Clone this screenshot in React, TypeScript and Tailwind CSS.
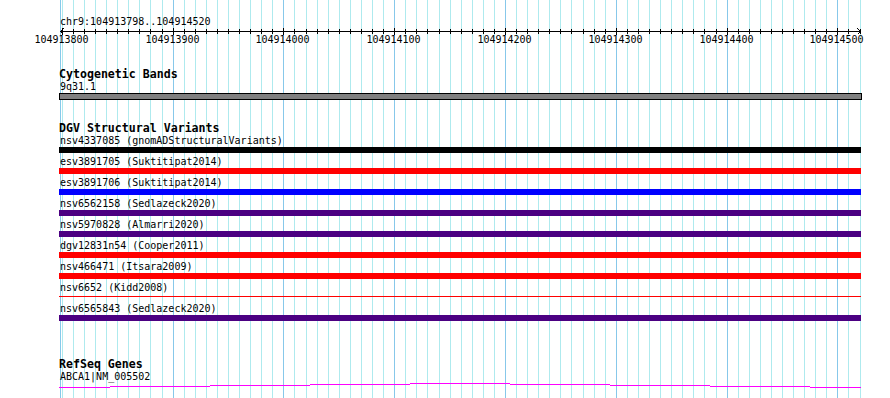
const mono = "font-['DejaVu_Sans_Mono','Liberation_Mono',monospace]"

type Variant = {
  label: string
  color: string
  thin?: boolean
}

const variants: Variant[] = [
  { label: 'nsv4337085 (gnomADStructuralVariants)', color: 'bg-black' },
  { label: 'esv3891705 (Suktitipat2014)', color: 'bg-[#ff0000]' },
  { label: 'esv3891706 (Suktitipat2014)', color: 'bg-[#0000ff]' },
  { label: 'nsv6562158 (Sedlazeck2020)', color: 'bg-[#4b0082]' },
  { label: 'nsv5970828 (Almarri2020)', color: 'bg-[#4b0082]' },
  { label: 'dgv12831n54 (Cooper2011)', color: 'bg-[#ff0000]' },
  { label: 'nsv466471 (Itsara2009)', color: 'bg-[#ff0000]' },
  { label: 'nsv6652 (Kidd2008)', color: 'bg-[#ff0000]', thin: true },
  { label: 'nsv6565843 (Sedlazeck2020)', color: 'bg-[#4b0082]' },
]

// one tick every 10 bp, 72 steps from 104913800 to 104914520
const ticks = Array.from({ length: 73 }, (_, k) => Math.floor(62.3 + 11.08 * k))

// intron connector of ABCA1, drawn as steps like the original
const intron = [
  { x1: 59, x2: 110, y: 4 },
  { x1: 110, x2: 210, y: 3 },
  { x1: 210, x2: 310, y: 2 },
  { x1: 310, x2: 410, y: 1 },
  { x1: 410, x2: 510, y: 0 },
  { x1: 510, x2: 610, y: 1 },
  { x1: 610, x2: 710, y: 2 },
  { x1: 710, x2: 810, y: 3 },
  { x1: 810, x2: 861, y: 4 },
]

function Grid() {
  return (
    <svg className="absolute inset-0" width={890} height={398} shapeRendering="crispEdges">
      <rect x={60} y={0} width={1} height={398} fill="#87c8ea" />
      {ticks.map((x, k) => (
        <rect
          key={k}
          x={x}
          y={0}
          width={1}
          height={398}
          fill={k > 0 && k % 10 === 0 ? '#87c8ea' : '#aeeaee'}
        />
      ))}
    </svg>
  )
}

function Ruler() {
  return (
    <svg width={890} height={17} shapeRendering="crispEdges">
      <rect x={60} y={3} width={801} height={1} fill="#000" />
      {ticks.map((x, k) =>
        k % 10 === 0 ? (
          <rect key={k} x={x} y={0} width={1} height={7} fill="#000" />
        ) : (
          <rect key={k} x={x} y={1} width={1} height={5} fill="#000" />
        ),
      )}
      <path d="M63.5 0.5 L60.5 3.5 L63.5 6.5" stroke="#000" fill="none" />
      <path d="M857.5 0.5 L860.5 3.5 L857.5 6.5" stroke="#000" fill="none" />
      {ticks
        .filter((_, k) => k % 10 === 0)
        .map((x, i) => (
          <text
            key={i}
            x={x - 0.5}
            y={15}
            textAnchor="middle"
            fontFamily="'DejaVu Sans Mono', 'Liberation Mono', monospace"
            fontSize={10}
            fill="#000"
            shapeRendering="auto"
          >
            {104913800 + i * 100}
          </text>
        ))}
    </svg>
  )
}

function TrackTitle({ children }: { children: string }) {
  return <div className="h-[12px] text-[11.6px] leading-[12px] font-bold whitespace-pre">{children}</div>
}

function Label({ children }: { children: string }) {
  return <div className="h-[13px] pl-px text-[10px] leading-[13px] whitespace-pre">{children}</div>
}

export default function App() {
  return (
    <div className={`relative w-[890px] h-[398px] overflow-hidden bg-white text-black ${mono}`}>
      <Grid />

      <div className="relative pt-[15px]">
        <div className="pl-[59px]">
          <Label>chr9:104913798..104914520</Label>
        </div>

        <Ruler />

        <div className="pl-[59px]">
          <div className="mt-[23px]">
            <TrackTitle>Cytogenetic Bands</TrackTitle>
            <Label>9q31.1</Label>
            <div className="w-[803px] h-[7px] border border-black bg-[#808080]" />
          </div>

          <div className="mt-[22px]">
            <TrackTitle>DGV Structural Variants</TrackTitle>
            <div className="flex flex-col gap-[2px]">
              {variants.map((v) => (
                <div key={v.label}>
                  <Label>{v.label}</Label>
                  {v.thin ? (
                    <div className="h-[6px] pt-[2px]">
                      <div className={`w-[802px] h-px ${v.color}`} />
                    </div>
                  ) : (
                    <div className={`w-[802px] h-[6px] ${v.color}`} />
                  )}
                </div>
              ))}
            </div>
          </div>

          <div className="mt-[37px]">
            <TrackTitle>RefSeq Genes</TrackTitle>
            <Label>ABCA1|NM_005502</Label>
          </div>
        </div>

        <svg width={890} height={5} shapeRendering="crispEdges">
          {intron.map((s) => (
            <rect key={s.x1} x={s.x1} y={s.y} width={s.x2 - s.x1} height={1} fill="#ff00ff" />
          ))}
        </svg>
      </div>
    </div>
  )
}
